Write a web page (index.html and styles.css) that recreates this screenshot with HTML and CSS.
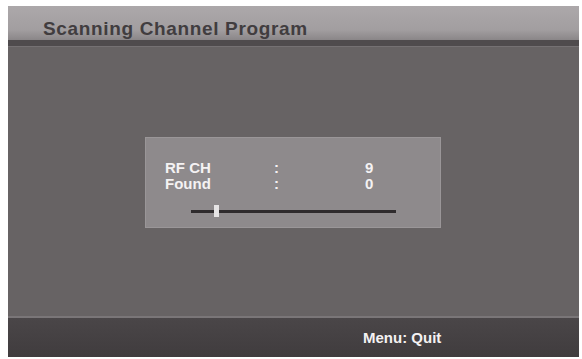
FILE: index.html
```html
<!DOCTYPE html>
<html>
<head>
<meta charset="utf-8">
<link rel="stylesheet" href="styles.css">
</head>
<body>
<div class="screen">
  <div class="header"><span class="title">Scanning Channel Program</span></div>
  <div class="main">
    <div class="dialog">
      <div class="row"><span class="label">RF CH</span><span class="colon">:</span><span class="value">9</span></div>
      <div class="row"><span class="label">Found</span><span class="colon">:</span><span class="value">0</span></div>
      <div class="slider"><div class="track"></div><div class="thumb"></div></div>
    </div>
  </div>
  <div class="footer"><span class="hint">Menu: Quit</span></div>
</div>
</body>
</html>
```

FILE: styles.css
```css
html, body { margin: 0; padding: 0; background: #ffffff; }
body { font-family: "Liberation Sans", Arial, sans-serif; }
.screen {
  margin: 6px 0 0 8px;
  width: 571px;
  height: 351px;
  display: flex;
  flex-direction: column;
  background: #676364;
}
.header {
  height: 34px;
  background: linear-gradient(#aca8aa, #a29ea0 70%, #8a8688);
  border-bottom: 6px solid #4f4b4d;
  box-shadow: 0 1px 0 #757173;
  display: flex;
  align-items: flex-end;
  padding-left: 35px;
}
.title {
  font-weight: bold;
  font-size: 19px;
  letter-spacing: 0.65px;
  color: #413d3f;
  line-height: 20px;
  margin-bottom: 1px;
}
.main {
  flex: 1;
  display: flex;
  align-items: flex-start;
  justify-content: flex-start;
  padding: 91px 0 0 137px;
}
.dialog {
  width: 296px;
  height: 91px;
  box-sizing: border-box;
  background: #8e8a8c;
  border: 1px solid #9a9698;
  padding: 22px 0 0 19px;
  color: #f4f2f3;
  font-weight: bold;
  font-size: 15px;
}
.row { display: flex; height: 16px; line-height: 16px; }
.label { width: 109px; }
.colon { width: 91px; }
.slider { position: relative; margin: 13px 0 0 26px; width: 205px; height: 12px; }
.track { position: absolute; left: 0; right: 0; top: 5px; height: 3px; background: #2f2b2d; }
.thumb { position: absolute; left: 23px; top: 0; width: 5px; height: 12px; background: #e6e4e5; }
.footer {
  height: 39px;
  border-top: 2px solid #7a7678;
  background: linear-gradient(#4a4648, #403c3e);
  display: flex;
  align-items: center;
  padding-left: 355px;
}
.hint { color: #f4f2f3; font-weight: bold; font-size: 15px; }
```
